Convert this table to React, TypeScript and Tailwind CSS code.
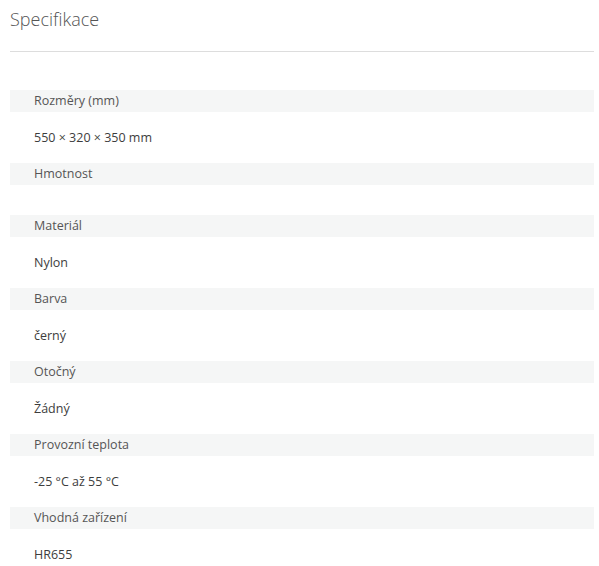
import React from "react";

const rows: [string, string][] = [
  ["Rozměry (mm)", "550 × 320 × 350 mm"],
  ["Hmotnost", ""],
  ["Materiál", "Nylon"],
  ["Barva", "černý"],
  ["Otočný", "Žádný"],
  ["Provozní teplota", "-25 °C až 55 °C"],
  ["Vhodná zařízení", "HR655"],
];

export default function App() {
  return (
    <div className="w-[599px] min-h-[566px] bg-white px-[10px] pt-[5px]" style={{ fontFamily: '"Open Sans", "Noto Sans", sans-serif' }}>
      <h2 className="text-[18px] leading-[28px] font-light text-[#555]">Specifikace</h2>
      <div className="mt-[18px] h-px w-[584px] bg-[#dddddd]" />
      <div className="mt-[38px] w-[584px]">
        {rows.map(([k, v]) => (
          <div key={k}>
            <div className="h-[22px] bg-[#f5f6f6] pl-[24px] text-[12.5px] leading-[22px] text-[#555]">{k}</div>
            <div className="pl-[24px] py-[15px] text-[12.5px] leading-[21px] text-[#3d3d3d] min-h-[30px]">{v}</div>
          </div>
        ))}
      </div>
    </div>
  );
}
